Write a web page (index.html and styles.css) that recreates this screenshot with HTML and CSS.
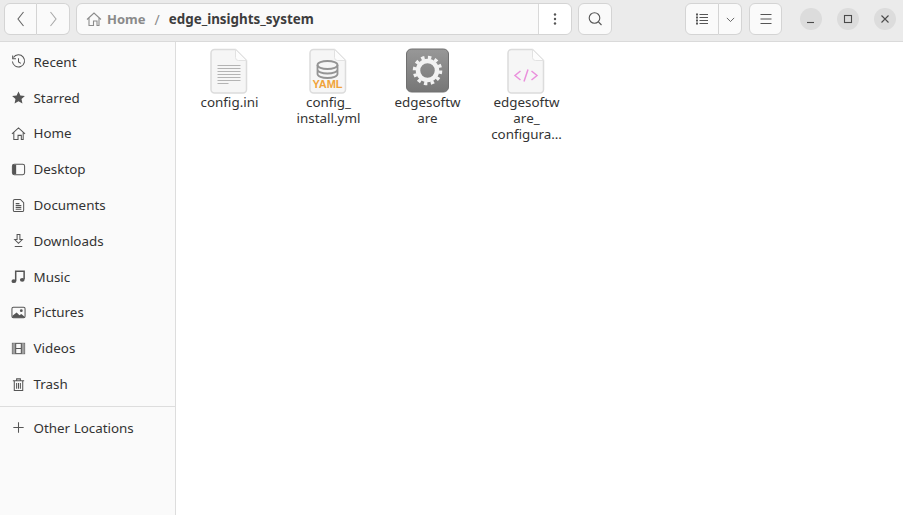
FILE: index.html
```html
<!DOCTYPE html>
<html lang="en">
<head>
  <meta charset="UTF-8" />
  <title>edge_insights_system</title>
  <link rel="stylesheet" href="styles.css">
</head>
<body>
  <header class="headerbar">
    <div class="btn-group nav-group">
      <button class="tool-btn nav-btn"><svg viewBox="0 0 16 16"><path d="M10.500 1 5 8l5.500 7" /></svg></button>
      <button class="tool-btn nav-btn dim"><svg viewBox="0 0 16 16"><path d="M5.500 1 11 8l-5.500 7" /></svg></button>
    </div>

    <div class="pathbar">
      <div class="crumbs">
        <svg class="crumb-home" viewBox="0 0 16 16"><path d="M1 8.500 8 2l7 6.500M3 7v7.500h4.500V10H11v4.500h2V7" /></svg>
        <span class="crumb-parent">Home</span>
        <span class="crumb-sep">/</span>
        <span class="crumb-current">edge_insights_system</span>
      </div>
      <button class="path-more"><svg viewBox="0 0 16 16"><circle cx="8" cy="3.500" r="1.200" /><circle cx="8" cy="8" r="1.200" /><circle cx="8" cy="12.500" r="1.200" /></svg></button>
    </div>

    <button class="tool-btn search-btn"><svg viewBox="0 0 16 16"><circle cx="7.500" cy="7" r="5.300" /><path d="m11.500 11 3 3" /></svg></button>

    <div class="spacer"></div>

    <div class="btn-group view-group">
      <button class="tool-btn list-btn"><svg viewBox="0 0 16 16"><path d="M5.500 3.500H14M5.500 6.500H14M5.500 9.500H14M5.500 12.500H14" /><path class="thick" d="M2 3.500h2M2 6.500h2M2 9.500h2M2 12.500h2" /></svg></button>
      <button class="tool-btn arrow-btn"><svg viewBox="0 0 16 16"><path d="m3.500 6 4.500 4.500L12.500 6" /></svg></button>
    </div>
    <button class="tool-btn menu-btn"><svg viewBox="0 0 16 16"><path d="M2.500 3.500h11M2.500 8h11M2.500 12.500h11" /></svg></button>

    <div class="win-controls">
      <button class="win-btn"><svg viewBox="0 0 12 12"><path d="M2 9.500h7" /></svg></button>
      <button class="win-btn"><svg viewBox="0 0 12 12"><rect x="2.500" y="2.500" width="7" height="7" /></svg></button>
      <button class="win-btn"><svg viewBox="0 0 12 12"><path d="m2.500 2.500 7 7M9.500 2.500l-7 7" /></svg></button>
    </div>
  </header>

  <div class="content">
    <nav class="sidebar">
      <div class="places">
        <a class="place"><svg viewBox="0 0 16 16"><path d="M2.600 3.700A6.500 6.500 0 1 1 1.500 8" /><path d="M1.800 1.500v3.500h3.500" /><path d="M8 4.500V8.500l2.500 1.500" /></svg>Recent</a>
        <a class="place"><svg viewBox="0 0 16 16"><path class="solid" d="m8 1.500 2 4.400 4.800.5-3.600 3.200 1 4.700L8 11.900l-4.200 2.400 1-4.700L1.200 6.400 6 5.900z" /></svg>Starred</a>
        <a class="place"><svg viewBox="0 0 16 16"><path d="M1 8.500 8 2l7 6.500M3 7v7.500h4.500V10H11v4.500h2V7" /></svg>Home</a>
        <a class="place"><svg viewBox="0 0 16 16"><rect x="1.500" y="2.500" width="13" height="11" rx="2" /><path class="solid" d="M2 3h3.500v10H2z" /></svg>Desktop</a>
        <a class="place"><svg viewBox="0 0 16 16"><path d="M4 1.500h6L13.500 5v8a1.500 1.500 0 0 1-1.500 1.500H4A1.500 1.500 0 0 1 2.500 13V3A1.500 1.500 0 0 1 4 1.500z" /><path d="M5 6h4M5 8h6M5 10h6M5 12h6" /></svg>Documents</a>
        <a class="place"><svg viewBox="0 0 16 16"><path d="M6.500 1.500h3V7H12l-4 4-4-4h2.500zM4 14.500h8" /></svg>Downloads</a>
        <a class="place"><svg viewBox="0 0 16 16"><path class="music" d="M5 13V2.500h9V11" /><path class="solid" d="M5.500 13a2.500 2 0 1 1-5 0 2.500 2 0 0 1 5 0zM14.500 11.500a2.500 2 0 1 1-5 0 2.500 2 0 0 1 5 0z" /></svg>Music</a>
        <a class="place"><svg viewBox="0 0 16 16"><rect x="1" y="2.500" width="14" height="11" rx="1.500" /><path class="solid" d="M1.500 13.500v-2L6 8l3 3 2-1.500 3.500 3V13.500z" /><circle class="solid" cx="11" cy="6" r="1.500" /></svg>Pictures</a>
        <a class="place"><svg viewBox="0 0 16 16"><rect x="1.500" y="2.500" width="13" height="11" /><path class="film-side" d="M1.500 2.500h3.500v11H1.500zM11 2.500h3.500v11H11z" /><path d="M5 2.500v11M11 2.500v11M5 8h6" /></svg>Videos</a>
        <a class="place"><svg viewBox="0 0 16 16"><path d="M2 4h12M6 4V2h4v2M3.500 4v10.500h9V4M6 6.500v6M8 6.500v6M10 6.500v6" /></svg>Trash</a>
      </div>
      <div class="side-sep"></div>
      <a class="place other"><svg viewBox="0 0 16 16"><path d="M8 2.500v11M2.500 8h11" /></svg>Other Locations</a>
    </nav>

    <main class="files">
      <div class="file">
        <svg class="file-icon" viewBox="1 0 48 46">
          <path class="page" d="M9.500 1.500h21l11 11v29a3.500 3.500 0 0 1-3.500 3.500H9.500A3.500 3.500 0 0 1 6 41.500v-36.500a3.500 3.500 0 0 1 3.500-3.500z" />
          <path class="fold" d="M30.500 1.500l11 11h-8a3 3 0 0 1-3-3z" />
          <path class="lines" d="M12.500 17.500h23M12.500 20.500h23M12.500 23.500h23M12.500 26.500h23M12.500 29.500h23M12.500 32.500h23M12.500 35.500h11" />
        </svg>
        <span class="file-name"><span class="name-line">config.ini</span></span>
      </div>
      <div class="file">
        <svg class="file-icon" viewBox="1 0 48 46">
          <path class="page" d="M9.500 1.500h21l11 11v29a3.500 3.500 0 0 1-3.500 3.500H9.500A3.500 3.500 0 0 1 6 41.500v-36.500a3.500 3.500 0 0 1 3.500-3.500z" />
          <path class="fold" d="M30.500 1.500l11 11h-8a3 3 0 0 1-3-3z" />
          <ellipse class="db" cx="23.500" cy="17" rx="10" ry="4" />
          <path class="db" d="M13.500 17v9c0 2.200 4.500 4 10 4s10-1.800 10-4V17M13.500 21.500c0 2.200 4.500 4 10 4s10-1.800 10-4" />
          <text class="yaml" x="23.500" y="39.500" text-anchor="middle">YAML</text>
        </svg>
        <span class="file-name"><span class="name-line">config_</span><span class="name-line">install.yml</span></span>
      </div>
      <div class="file">
        <svg class="file-icon" viewBox="0 0 48 46">
          <defs>
            <linearGradient id="exec-bg" x1="0" y1="0" x2="0" y2="1">
              <stop offset="0" stop-color="#989898" />
              <stop offset="1" stop-color="#767676" />
            </linearGradient>
          </defs>
          <rect x="2.500" y="1" width="42" height="43" rx="5" fill="url(#exec-bg)" stroke="#707070" />
          <g class="gear">
            <circle class="gear-ring" cx="23.500" cy="22.500" r="9.500" />
            <circle class="gear-teeth" cx="23.500" cy="22.500" r="13" />
          </g>
        </svg>
        <span class="file-name"><span class="name-line">edgesoftw</span><span class="name-line">are</span></span>
      </div>
      <div class="file">
        <svg class="file-icon" viewBox="1 0 48 46">
          <path class="page" d="M9.500 1.500h21l11 11v29a3.500 3.500 0 0 1-3.500 3.500H9.500A3.500 3.500 0 0 1 6 41.500v-36.500a3.500 3.500 0 0 1 3.500-3.500z" />
          <path class="fold" d="M30.500 1.500l11 11h-8a3 3 0 0 1-3-3z" />
          <path class="code" d="M18.500 23l-5.500 4.500 5.500 4.500M29.500 23l5.500 4.500-5.500 4.500M26 21.500l-4 12" />
        </svg>
        <span class="file-name"><span class="name-line">edgesoftw</span><span class="name-line">are_</span><span class="name-line">configura…</span></span>
      </div>
    </main>
  </div>
</body>
</html>
```

FILE: styles.css
```css
* { box-sizing: border-box; font-family: 'Noto Sans', 'Open Sans', sans-serif; }

body {
  margin: 0;
  width: 903px;
  height: 515px;
  overflow: hidden;
  background: #ffffff;
  color: #3d3d3d;
  font-size: 14px;
}

svg { fill: none; stroke: #555555; stroke-width: 1.1; }
svg .solid { fill: #555555; stroke: none; }
svg .music { stroke-width: 1.600; }
svg .film-side { fill: #a0a0a0; stroke: none; }

button { padding: 0; margin: 0; }

.headerbar {
  height: 42px;
  padding: 3px 7px 4px 4px;
  display: flex;
  align-items: flex-start;
  background: #ebebeb;
  border-bottom: 1px solid #dadada;
}

.btn-group { display: flex; }

.tool-btn {
  height: 32px;
  background: #fafafa;
  border: 1px solid #d4d4d4;
  border-radius: 6px;
  display: flex;
  align-items: center;
  justify-content: center;
}
.tool-btn svg { width: 16px; height: 16px; }

.btn-group .tool-btn:first-child { border-radius: 6px 0 0 6px; }
.btn-group .tool-btn:last-child { border-radius: 0 6px 6px 0; border-left: none; }

.nav-btn { width: 33px; }
.nav-btn svg { stroke: #666666; }
.nav-btn.dim svg { stroke: #a9a9a9; }

.pathbar {
  width: 496px;
  height: 32px;
  margin-left: 6px;
  display: flex;
  background: #fafafa;
  border: 1px solid #d4d4d4;
  border-radius: 6px;
}

.crumbs {
  flex: 1;
  display: flex;
  align-items: center;
  padding-left: 9px;
  font-size: 13px;
  font-weight: 700;
}
.crumb-home { width: 16px; height: 16px; stroke: #8c8c8c; }
.crumb-parent { margin-left: 5px; color: #8a8a8a; }
.crumb-sep { margin: 0 9px 0 9px; color: #8a8a8a; font-weight: 400; font-size: 14px; }
.crumb-current { color: #3d3d3d; font-size: 13.400px; }

.path-more {
  width: 33px;
  background: #ffffff;
  border: none;
  border-left: 1px solid #d9d9d9;
  border-radius: 0 6px 6px 0;
  display: flex;
  align-items: center;
  justify-content: center;
}
.path-more svg { width: 16px; height: 16px; stroke: none; fill: #555555; }

.search-btn { width: 34px; margin-left: 6px; }

.spacer { flex: 1; }

.list-btn { width: 34px; }
.arrow-btn { width: 23px; }
.arrow-btn svg { width: 13px; height: 13px; }
.list-btn svg .thick { stroke-width: 2; }

.menu-btn { width: 33px; margin-left: 7px; }

.win-controls { display: flex; gap: 15px; margin: 5px 0 0 18px; }

.win-btn {
  width: 22px;
  height: 22px;
  border: none;
  border-radius: 50%;
  background: #dcdcdc;
  display: flex;
  align-items: center;
  justify-content: center;
}
.win-btn svg { width: 12px; height: 12px; stroke: #4a4a4a; }

.content { display: flex; height: 473px; }

.sidebar {
  width: 176px;
  flex: none;
  padding-top: 2px;
  background: #fafafa;
  border-right: 1px solid #dddddd;
}

.place {
  height: 35.800px;
  padding-left: 11px;
  display: flex;
  align-items: center;
  gap: 7.500px;
  color: #333333;
  font-size: 13.400px;
  white-space: nowrap;
}
.place svg { width: 15px; height: 15px; flex: none; }

.side-sep { height: 1px; margin-top: 4px; background: #dddddd; }
.place.other { margin-top: 3px; }

.files {
  flex: 1;
  padding: 6px 0 0 4px;
  display: grid;
  grid-template-columns: repeat(4, 99px);
  grid-auto-rows: max-content;
}

.file { display: flex; flex-direction: column; align-items: center; }

.file-icon { width: 48px; height: 46px; stroke-width: 1; }
.file-icon .page { fill: #f6f6f6; stroke: #dcdcdc; stroke-width: 1.500; }
.file-icon .fold { fill: #fdfdfd; stroke: #e2e2e2; }
.file-icon .lines { stroke: #b4b4b4; }
.file-icon .db { stroke: #949494; stroke-width: 1.800; }
.file-icon .yaml { fill: #f0a33a; stroke: none; font-size: 11px; font-weight: 700; font-family: 'Liberation Sans', sans-serif; }
.file-icon .gear { stroke: #f2f2f2; }
.file-icon .gear-ring { stroke-width: 4.500; }
.file-icon .gear-teeth { stroke-width: 3.500; stroke-dasharray: 3.400 3.410; }
.file-icon .code { stroke: #ea90dc; stroke-width: 1.500; }

.file-name {
  display: block;
  text-align: center;
  font-size: 13.400px;
  color: #333333;
}
.name-line { display: block; height: 16px; line-height: 16px; }
```
